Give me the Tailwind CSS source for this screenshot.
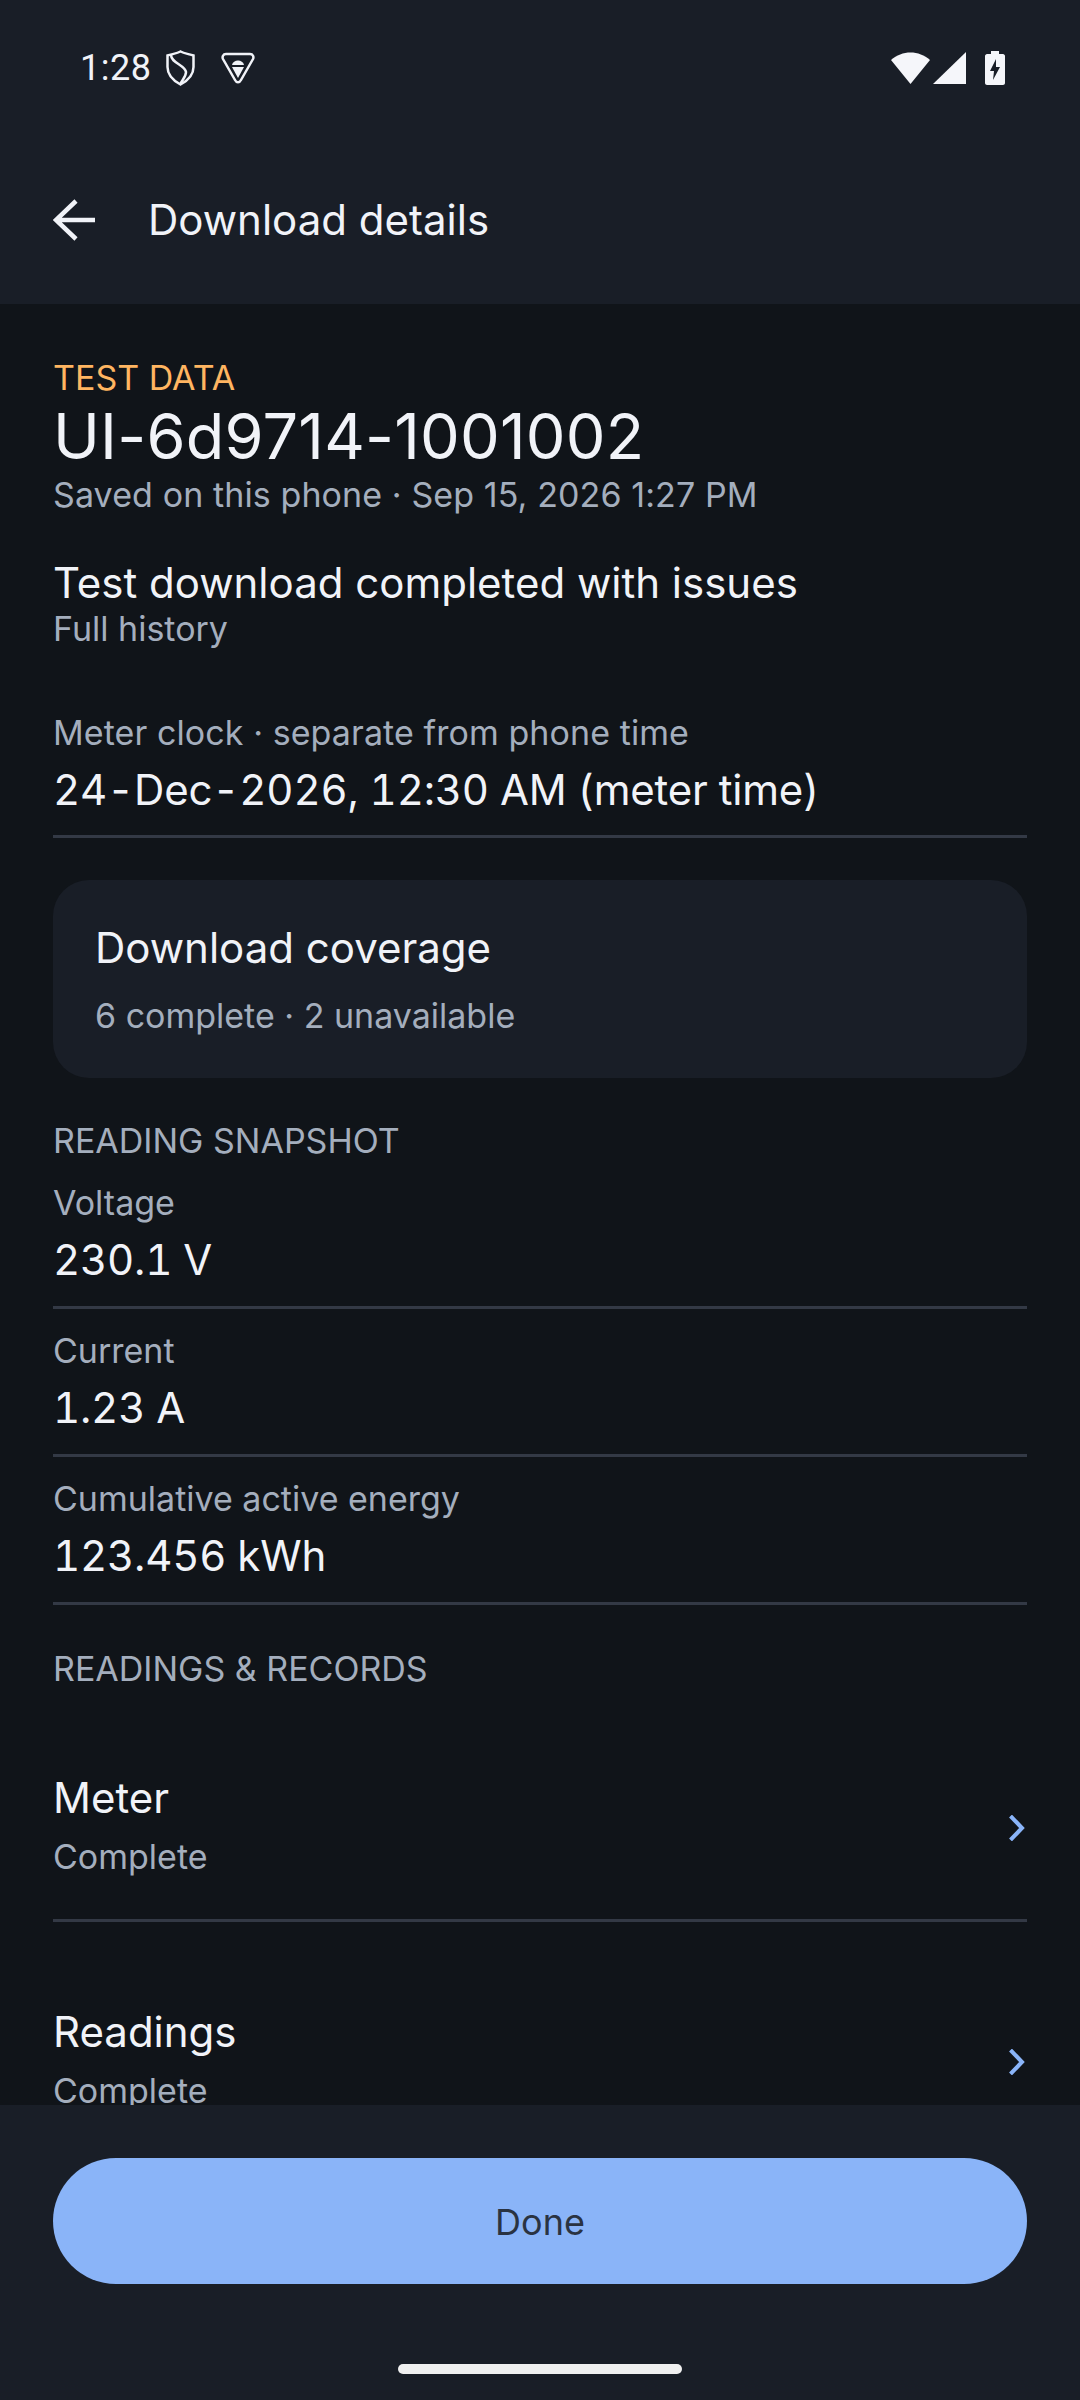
<!DOCTYPE html>
<html lang="en">
<head>
    <meta charset="UTF-8">
    <title>Download details</title>
    <script src="https://cdn.jsdelivr.net/npm/@tailwindcss/browser@4"></script>
</head>
<body class="bg-[#101419]">
<div class="w-[1080px] h-[2400px] flex flex-col overflow-hidden font-['Inter',sans-serif] text-[#f1f3f8]">

    <!-- Status bar + app bar -->
    <header class="h-[304px] shrink-0 bg-[#191e27] flex flex-col">
        <div class="h-[136px] flex items-center pl-[80px] pr-[75px]">
            <span class="font-['Roboto',sans-serif] text-[36px] leading-[40px] tracking-[0.5px] w-[86px]">1:28</span>
            <svg class="w-[29px] h-[36px]" viewBox="0 0 29 36" fill="none" stroke="#f1f3f8" stroke-width="2.5">
                <path d="M14.500 1.500 C18 3.500 23 4 27.500 5.500 V17 C27.500 25 21 31 14.500 34.500 C8 31 1.500 25 1.500 17 V5.500 C6 4 11 3.500 14.500 1.500 Z"/>
                <path d="M5 5 C5 13 19 15 20 22 C20 27 16 30 14.500 34"/>
            </svg>
            <svg class="w-[34px] h-[32px] ml-[26px]" viewBox="0 0 34 32" fill="none">
                <path d="M5 2 H29 C32 2 33 5 32 7 L20 28 C18.500 31 15.500 31 14 28 L2 7 C1 5 2 2 5 2 Z" stroke="#f1f3f8" stroke-width="2.500"/>
                <path d="M11 13 C12 7 22 7 23 13 Z" fill="#f1f3f8"/>
                <path d="M11 15 H23 L17 26 Z" fill="#f1f3f8"/>
            </svg>
            <div class="ml-auto flex items-center">
                <svg class="w-[39px] h-[32px]" viewBox="0 0 39 32" fill="#f5f6fa"><path d="M0 8 C11 -2 28 -2 39 8 L19.500 32 Z"/></svg>
                <svg class="w-[33px] h-[32px] ml-[3px]" viewBox="0 0 33 32" fill="#f5f6fa"><path d="M33 0 V32 H0 Z"/></svg>
                <svg class="w-[20px] h-[34px] ml-[19px]" viewBox="0 0 20 34">
                    <path fill="#f5f6fa" d="M6 0 H14 V3 H18 C19 3 20 4 20 5 V32 C20 33 19 34 18 34 H2 C1 34 0 33 0 32 V5 C0 4 1 3 2 3 H6 Z"/>
                    <path fill="#191e27" d="M11 8 L5 20 H9 L8 29 L15 16 H11 Z"/>
                </svg>
            </div>
        </div>
        <div class="flex items-center h-[168px]">
            <svg class="w-[42px] h-[42px] ml-[53px]" viewBox="0 0 42 42" fill="none" stroke="#f1f3f8" stroke-width="4.5">
                <path d="M42 21 H3 M23 2 L3 21 L23 40"/>
            </svg>
            <h1 class="ml-[53px] text-[42px] leading-[50px]">Download details</h1>
        </div>
    </header>

    <!-- Scrolling content -->
    <main class="flex-1 overflow-hidden px-[53px] pt-[54px]">
        <p class="text-[34px] leading-[40px] text-[#ffb561]">TEST DATA</p>
        <h2 class="text-[63px] leading-[72px] mt-[2px] tracking-[0.2px]">UI-6d9714-1001002</h2>
        <p class="mt-[3px] text-[34px] leading-[40px] tracking-[0.1px] text-[#a4aebd]">Saved on this phone · Sep 15, 2026 1:27 PM</p>

        <p class="mt-[43px] text-[42px] leading-[50px]">Test download completed with issues</p>
        <p class="mt-[1px] text-[34px] leading-[40px] text-[#a4aebd]">Full history</p>

        <p class="mt-[64px] text-[34px] leading-[40px] tracking-[0.08px] text-[#a4aebd]">Meter clock · separate from phone time</p>
        <p class="mt-[12px] text-[42px] leading-[50px] tabular-nums tracking-[-0.2px] pb-[20px] border-b-[3px] border-[#333945]">24-Dec-2026, 12:30 AM (meter time)</p>

        <section class="mt-[42px] h-[198px] rounded-[36px] bg-[#191e27] px-[42px] pt-[43px]">
            <p class="text-[42px] leading-[50px]">Download coverage</p>
            <p class="mt-[23px] text-[34px] leading-[40px] text-[#a4aebd]">6 complete · 2 unavailable</p>
        </section>

        <p class="mt-[43px] text-[34px] leading-[40px] text-[#a4aebd]">READING SNAPSHOT</p>
        <div class="mt-[22px] h-[126px] border-b-[3px] border-[#333945]">
            <p class="text-[34px] leading-[40px] text-[#a4aebd]">Voltage</p>
            <p class="mt-[12px] text-[42px] leading-[50px] tabular-nums tracking-[-0.2px]">230.1 V</p>
        </div>
        <div class="mt-[22px] h-[126px] border-b-[3px] border-[#333945]">
            <p class="text-[34px] leading-[40px] text-[#a4aebd]">Current</p>
            <p class="mt-[12px] text-[42px] leading-[50px] tabular-nums tracking-[-0.2px]">1.23 A</p>
        </div>
        <div class="mt-[22px] h-[126px] border-b-[3px] border-[#333945]">
            <p class="text-[34px] leading-[40px] text-[#a4aebd]">Cumulative active energy</p>
            <p class="mt-[12px] text-[42px] leading-[50px] tabular-nums tracking-[-0.2px]">123.456 kWh</p>
        </div>

        <p class="mt-[44px] text-[34px] leading-[40px] text-[#a4aebd]">READINGS &amp; RECORDS</p>

        <div class="mt-[84px] h-[149px] flex items-start border-b-[3px] border-[#333945]">
            <div class="flex-1">
                <p class="text-[42px] leading-[50px]">Meter</p>
                <p class="mt-[14px] text-[34px] leading-[40px] text-[#a4aebd]">Complete</p>
            </div>
            <svg class="w-[16px] h-[26px] mt-[42px] mr-[2px]" viewBox="0 0 16 26" fill="none" stroke="#8ab4f8" stroke-width="4"><path d="M1.500 1 L13 13 L1.500 25"/></svg>
        </div>
        <div class="mt-[85px] flex items-start">
            <div class="flex-1">
                <p class="text-[42px] leading-[50px]">Readings</p>
                <p class="mt-[14px] text-[34px] leading-[40px] text-[#a4aebd]">Complete</p>
            </div>
            <svg class="w-[16px] h-[26px] mt-[42px] mr-[2px]" viewBox="0 0 16 26" fill="none" stroke="#8ab4f8" stroke-width="4"><path d="M1.500 1 L13 13 L1.500 25"/></svg>
        </div>
    </main>

    <!-- Bottom bar -->
    <footer class="h-[295px] shrink-0 bg-[#191e27] flex flex-col items-center px-[53px] pt-[53px]">
        <button class="w-full h-[126px] rounded-full bg-[#8ab4f8] text-[#2a3342] text-[36px] leading-[44px] pt-[1px]">Done</button>
        <div class="mt-[80px] w-[284px] h-[10px] rounded-full bg-[#f0f0f0]"></div>
    </footer>
</div>
</body>
</html>
